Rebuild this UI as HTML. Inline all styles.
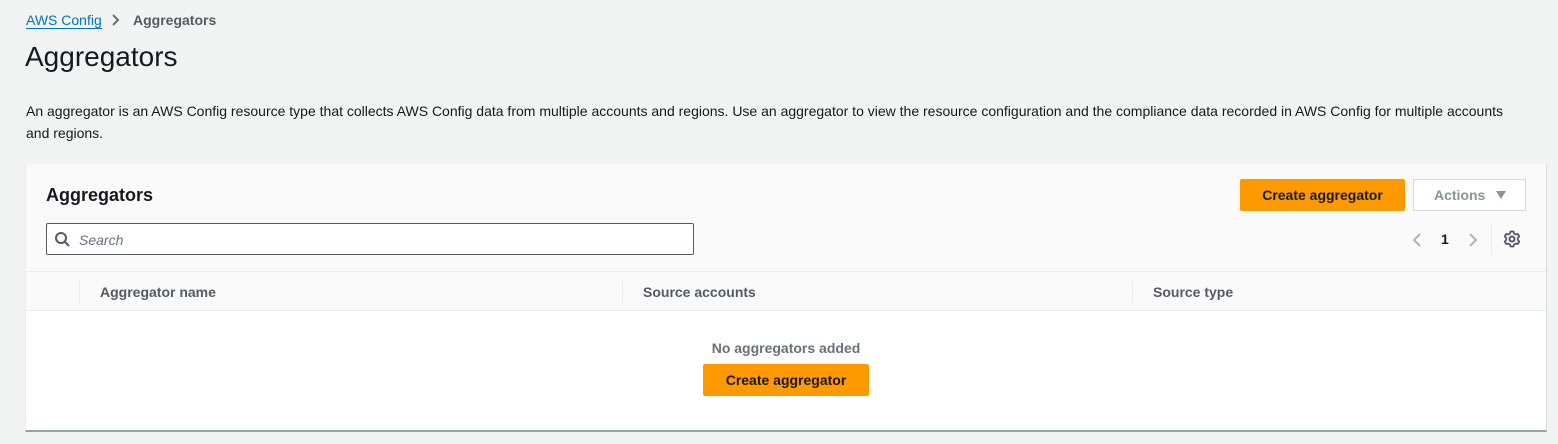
<!DOCTYPE html>
<html><head><style>
*{box-sizing:border-box;margin:0;padding:0}
body{width:1558px;height:444px;background:#f2f3f3;font-family:"Liberation Sans",sans-serif;color:#16191f;position:relative;overflow:hidden}
.a{position:absolute;white-space:nowrap}
.btn{position:absolute;background:#ff9900;border-radius:2px;font-weight:bold;font-size:14px;color:#16191f;text-align:center}
</style></head><body>
<div class="a" style="left:26px;top:12px;font-size:14px;color:#0073bb;border-bottom:1px solid #0073bb;line-height:16px">AWS Config</div>
<svg class="a" style="left:111px;top:13px" width="10" height="14"><path d="M2 2l5 5-5 5" fill="none" stroke="#687078" stroke-width="2"/></svg>
<div class="a" style="left:133px;top:12px;font-size:14px;font-weight:bold;color:#545b64;line-height:16px">Aggregators</div>
<div class="a" style="left:25px;top:40px;font-size:28px;line-height:34px">Aggregators</div>
<div class="a" style="left:26px;top:100px;font-size:14px;line-height:22px;white-space:normal;width:1490px">An aggregator is an AWS Config resource type that collects AWS Config data from multiple accounts and regions. Use an aggregator to view the resource configuration and the compliance data recorded in AWS Config for multiple accounts and regions.</div>
<div class="a" style="left:25px;top:164px;width:1522px;height:268px;background:#fff;border-left:1px solid #eaeded;border-right:1px solid #d5dbdb;border-bottom:2px solid #95a5a6">
 <div class="a" style="left:0;top:0;width:1520px;height:147px;background:#fafafa;border-bottom:1px solid #eaeded"></div>
 <div class="a" style="left:0;top:107px;width:1520px;height:1px;background:#eaeded"></div>
</div>
<div class="a" style="left:46px;top:184px;font-size:18px;font-weight:bold;line-height:22px">Aggregators</div>
<div class="btn" style="left:1240px;top:179px;width:165px;height:32px;line-height:32px">Create aggregator</div>
<div class="a" style="left:1413px;top:179px;width:113px;height:32px;border:1px solid #d5dbdb;background:#fff;color:#879596;font-weight:bold;font-size:14px;line-height:30px;padding-left:20px">Actions</div>
<svg class="a" style="left:1495px;top:190px" width="12" height="10"><path d="M1 1h10l-5 8z" fill="#879596"/></svg>
<div class="a" style="left:46px;top:223px;width:648px;height:32px;border:1px solid #545b64;border-radius:2px;background:#fff"></div>
<svg class="a" style="left:54px;top:231px" width="16" height="16"><circle cx="7" cy="7" r="5" fill="none" stroke="#545b64" stroke-width="2"/><path d="M11 11l4 4" stroke="#545b64" stroke-width="2"/></svg>
<div class="a" style="left:79px;top:232px;font-size:14px;font-style:italic;color:#687078;line-height:16px">Search</div>
<svg class="a" style="left:1411px;top:232px" width="12" height="16"><path d="M9 2l-6 6 6 6" fill="none" stroke="#aab7b8" stroke-width="2"/></svg>
<div class="a" style="left:1441px;top:231px;font-size:14px;font-weight:bold;line-height:16px">1</div>
<svg class="a" style="left:1467px;top:232px" width="12" height="16"><path d="M3 2l6 6-6 6" fill="none" stroke="#aab7b8" stroke-width="2"/></svg>
<div class="a" style="left:1491px;top:223px;width:1px;height:32px;background:#eaeded"></div>
<svg class="a" style="left:1503px;top:230px" width="18" height="18" viewBox="0 0 18 18"><circle cx="9" cy="9" r="2.5" fill="none" stroke="#545b64" stroke-width="2"/><path d="M7.5 1.5h3l.5 2 1.8 1 2-.6 1.5 2.6-1.5 1.5v2l1.5 1.5-1.5 2.6-2-.6-1.8 1-.5 2h-3l-.5-2-1.8-1-2 .6-1.5-2.6 1.5-1.5v-2L1.700 6.5l1.5-2.6 2 .6 1.8-1z" fill="none" stroke="#545b64" stroke-width="1.8" stroke-linejoin="round"/></svg>
<div class="a" style="left:79px;top:281px;width:1px;height:22px;background:#eaeded"></div>
<div class="a" style="left:622px;top:281px;width:1px;height:22px;background:#eaeded"></div>
<div class="a" style="left:1132px;top:281px;width:1px;height:22px;background:#eaeded"></div>
<div class="a" style="left:100px;top:284px;font-size:14px;font-weight:bold;color:#545b64;line-height:16px">Aggregator name</div>
<div class="a" style="left:643px;top:284px;font-size:14px;font-weight:bold;color:#545b64;line-height:16px">Source accounts</div>
<div class="a" style="left:1153px;top:284px;font-size:14px;font-weight:bold;color:#545b64;line-height:16px">Source type</div>
<div class="a" style="left:0;width:1572px;top:340px;text-align:center;font-size:14px;font-weight:bold;color:#687078;line-height:16px">No aggregators added</div>
<div class="btn" style="left:703px;top:364px;width:166px;height:32px;line-height:32px">Create aggregator</div>
</body></html>
